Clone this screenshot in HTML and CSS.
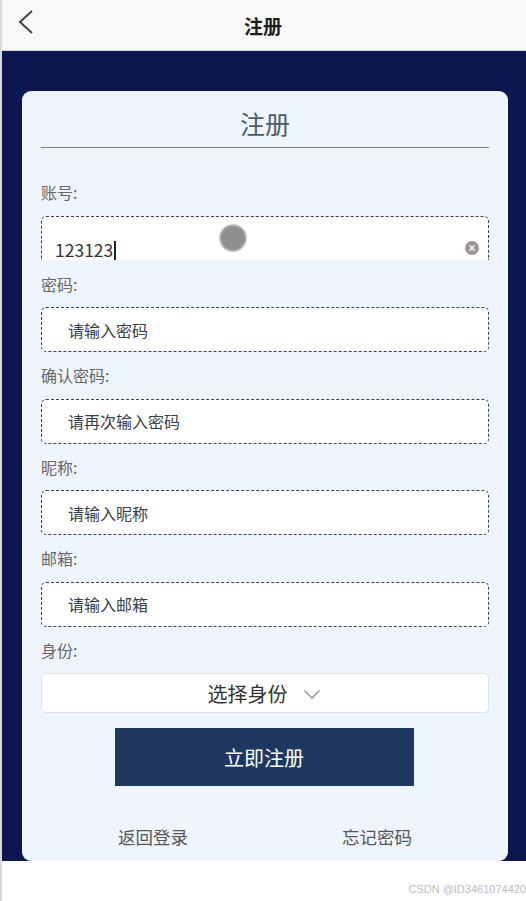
FILE: index.html
```html
<!DOCTYPE html>
<html lang="zh-CN">
<head>
<meta charset="utf-8">
<title>注册</title>
<link rel="stylesheet" href="styles.css">
</head>
<body>
<div class="page">
  <header class="topbar">
    <svg class="back" width="16" height="24" viewBox="0 0 16 24"><path d="M14 1 L2 12 L14 23" fill="none" stroke="#444" stroke-width="2"/></svg>
    <h1 class="topbar-title">注册</h1>
  </header>
  <main class="stage">
    <section class="card">
      <h2 class="card-title">注册</h2>
      <div class="divider"></div>
      <div class="field">
        <label class="label">账号:</label>
        <div class="input input-active">
          <span class="value">123123</span><span class="caret"></span>
          <span class="clear"><svg width="14" height="14" viewBox="0 0 14 14"><circle cx="7" cy="7" r="7" fill="#9b9694"/><path d="M4.5 4.5 L9.5 9.5 M9.5 4.5 L4.5 9.5" stroke="#fff" stroke-width="1.4"/></svg></span>
          <span class="touch"></span>
        </div>
      </div>
      <div class="field">
        <label class="label">密码:</label>
        <div class="input"><span class="ph">请输入密码</span></div>
      </div>
      <div class="field">
        <label class="label">确认密码:</label>
        <div class="input"><span class="ph">请再次输入密码</span></div>
      </div>
      <div class="field">
        <label class="label">昵称:</label>
        <div class="input"><span class="ph">请输入昵称</span></div>
      </div>
      <div class="field">
        <label class="label">邮箱:</label>
        <div class="input"><span class="ph">请输入邮箱</span></div>
      </div>
      <div class="field">
        <label class="label">身份:</label>
        <div class="select">
          <span class="select-text">选择身份</span>
          <svg class="chev" width="18" height="11" viewBox="0 0 18 11"><path d="M1.5 1.5 L9 9 L16.5 1.5" fill="none" stroke="#9a9a9a" stroke-width="1.6"/></svg>
        </div>
      </div>
      <button class="submit">立即注册</button>
      <div class="links">
        <a class="link">返回登录</a>
        <a class="link">忘记密码</a>
      </div>
    </section>
  </main>
  <footer class="footer">CSDN @ID3461074420</footer>
</div>
</body>
</html>
```

FILE: styles.css
```css
* { box-sizing: border-box; margin: 0; padding: 0; }
html, body { width: 526px; height: 901px; overflow: hidden; background: #fff; }
body { font-family: "Noto Sans CJK SC", "Noto Sans", sans-serif; }

.page {
  border-left: 2px solid #d9d9dc;
  height: 901px;
  display: flex;
  flex-direction: column;
}

.topbar {
  height: 51px;
  background: #f8f8f8;
  border-bottom: 1px solid #d6d6de;
  display: flex;
  align-items: center;
  justify-content: center;
  position: relative;
}
.back { position: absolute; left: 16px; top: 10px; }
.topbar-title {
  font-size: 19px;
  font-weight: 700;
  color: #1e1e1e;
  margin-left: -2px;
}

.stage {
  background: #0c1650;
  padding: 40px 18px 0 20px;
}

.card {
  background: #eff5fe;
  border-radius: 9px;
  padding: 10px 19px 13px;
  display: flex;
  flex-direction: column;
}
.card-title {
  font-size: 25px;
  font-weight: 400;
  color: #4a5c6b;
  text-align: center;
  line-height: 44px;
  margin-bottom: 2px;
}
.divider {
  height: 1px;
  background: #7f8488;
  margin-bottom: 21px;
}

.label {
  display: flex;
  align-items: center;
  height: 46.5px;
  font-size: 16px;
  color: #666;
}
.input {
  height: 45px;
  background: #fff;
  border: 1px dashed #33425a;
  border-radius: 5px;
  display: flex;
  align-items: center;
  padding-left: 26px;
  font-size: 16px;
  color: #363d4b;
}
.input-active {
  position: relative;
  height: 44px;
  border-bottom: none;
  border-radius: 5px 5px 0 0;
  padding-left: 13px;
  align-items: flex-end;
  margin-bottom: 1px;
}
.value { font-size: 17.5px; color: #333; line-height: 20px; }
.caret {
  display: inline-block;
  width: 1.5px;
  height: 19px;
  background: #222;
  margin-left: 1px;
  align-self: flex-end;
}
.clear {
  position: absolute;
  right: 9px;
  top: 24px;
  width: 14px;
  height: 14px;
  display: flex;
}
.touch {
  position: absolute;
  left: 177px;
  top: 7px;
  width: 28px;
  height: 28px;
  border-radius: 50%;
  background: radial-gradient(circle, #8f8f8f 0, #8f8f8f 11px, #b5b5b5 13px, rgba(200,200,200,0.6) 14px);
}

.select {
  height: 40px;
  background: #fff;
  border: 1px solid #dfe2e6;
  border-radius: 5px;
  display: flex;
  align-items: center;
  justify-content: center;
  gap: 15px;
  padding-right: 2px;
}
.select-text { font-size: 20px; color: #333; }
.chev { margin-top: 2px; }

.submit {
  align-self: center;
  margin-top: 15px;
  width: 299px;
  height: 58px;
  border: none;
  background: #1e3862;
  color: #fff;
  font-family: inherit;
  font-size: 20px;
  margin-left: -2px;
}

.links {
  margin-top: 40px;
  display: flex;
  justify-content: space-around;
  line-height: 22px;
}
.link { font-size: 17.5px; color: #555; }

.footer {
  flex: 1;
  text-align: right;
  font-family: "Liberation Sans", Arial, sans-serif;
  font-size: 11px;
  color: #bdbdbd;
  padding-top: 22px;
  white-space: nowrap;
}
```
